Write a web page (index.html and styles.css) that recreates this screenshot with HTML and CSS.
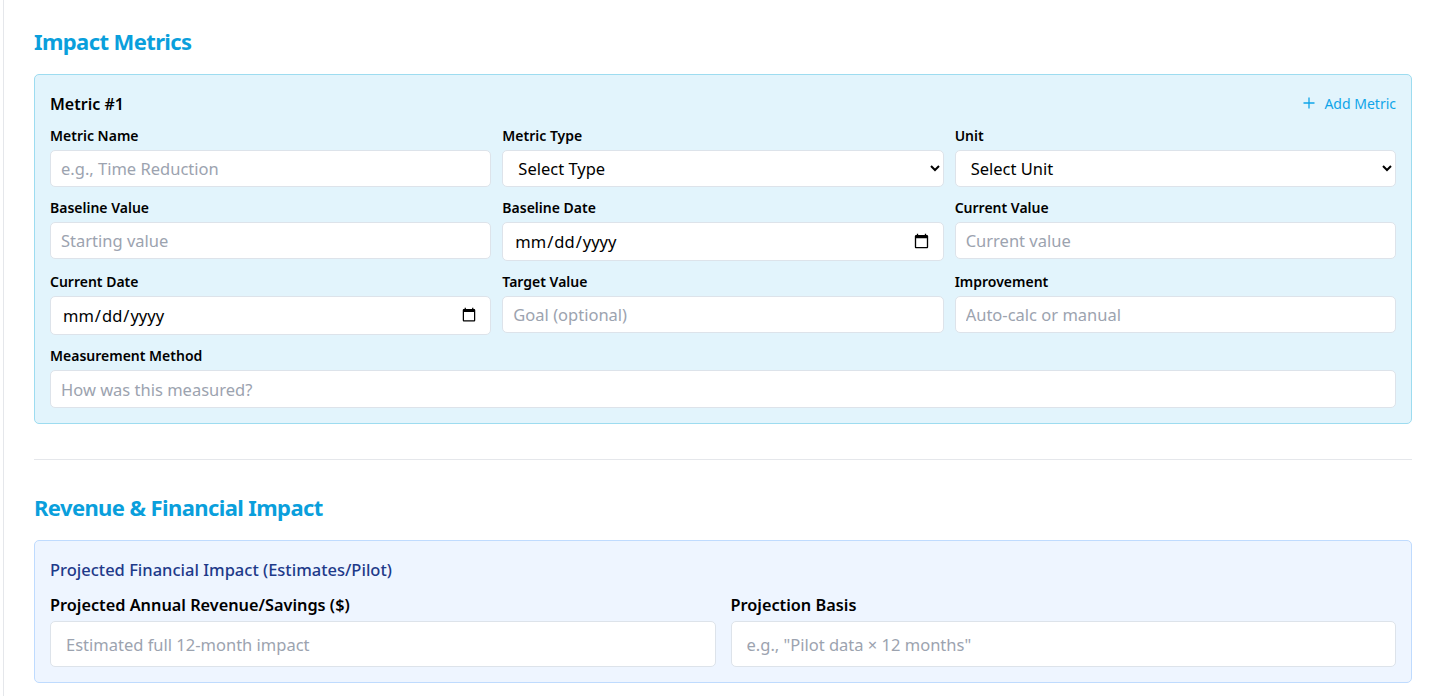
FILE: index.html
```html
<!DOCTYPE html>
<html lang="en">
<head>
<meta charset="utf-8">
<title>Impact Metrics</title>
<link rel="stylesheet" href="styles.css">
</head>
<body>
<div class="page">
  <section class="section">
    <h2 class="section-title">Impact Metrics</h2>
    <div class="metric-card">
      <div class="metric-head">
        <h3 class="metric-title">Metric #1</h3>
        <button class="add-btn" type="button">
          <svg width="12" height="12" viewBox="0 0 12 12" aria-hidden="true"><path d="M6 0.5v11M0.5 6h11" stroke="currentColor" stroke-width="1.3" fill="none"/></svg>
          <span>Add Metric</span>
        </button>
      </div>
      <div class="grid3">
        <div class="field">
          <label class="lbl">Metric Name</label>
          <input class="inp" type="text" placeholder="e.g., Time Reduction">
        </div>
        <div class="field">
          <label class="lbl">Metric Type</label>
          <select class="sel"><option>Select Type</option></select>
        </div>
        <div class="field">
          <label class="lbl">Unit</label>
          <select class="sel"><option>Select Unit</option></select>
        </div>
        <div class="field">
          <label class="lbl">Baseline Value</label>
          <input class="inp" type="text" placeholder="Starting value">
        </div>
        <div class="field">
          <label class="lbl">Baseline Date</label>
          <input class="inp date" type="date">
        </div>
        <div class="field">
          <label class="lbl">Current Value</label>
          <input class="inp" type="text" placeholder="Current value">
        </div>
        <div class="field">
          <label class="lbl">Current Date</label>
          <input class="inp date" type="date">
        </div>
        <div class="field">
          <label class="lbl">Target Value</label>
          <input class="inp" type="text" placeholder="Goal (optional)">
        </div>
        <div class="field">
          <label class="lbl">Improvement</label>
          <input class="inp" type="text" placeholder="Auto-calc or manual">
        </div>
        <div class="field span3">
          <label class="lbl">Measurement Method</label>
          <input class="inp wide" type="text" placeholder="How was this measured?">
        </div>
      </div>
    </div>
  </section>
  <hr class="divider">
  <section class="section">
    <h2 class="section-title">Revenue &amp; Financial Impact</h2>
    <div class="fin-card">
      <h4 class="fin-title">Projected Financial Impact (Estimates/Pilot)</h4>
      <div class="grid2">
        <div class="field">
          <label class="lbl2">Projected Annual Revenue/Savings ($)</label>
          <input class="inp2" type="text" placeholder="Estimated full 12-month impact">
        </div>
        <div class="field">
          <label class="lbl2">Projection Basis</label>
          <input class="inp2" type="text" placeholder="e.g., &quot;Pilot data × 12 months&quot;">
        </div>
      </div>
    </div>
  </section>
</div>
</body>
</html>
```

FILE: styles.css
```css
* { box-sizing: border-box; }
html, body {
  margin: 0;
  background: #ffffff;
  font-family: "Noto Sans", "Open Sans", sans-serif;
  color: #111;
}
body { padding-left: 3px; }
.page {
  border-left: 1px solid #e5e7eb;
  padding: 25px 29px 0 30px;
  min-height: 696px;
}
.section-title {
  margin: 0 0 17px 0;
  font-size: 22px;
  line-height: 32px;
  font-weight: 700;
  color: #0a9fdc;
  letter-spacing: -0.6px;
}
.metric-card {
  background: #e2f4fc;
  border: 1px solid #9ddcf0;
  border-radius: 5px;
  padding: 15px 15px 15px 15px;
}
.metric-head {
  display: flex;
  justify-content: space-between;
  align-items: center;
  height: 28px;
  margin-bottom: 8px;
}
.metric-title {
  margin: 0;
  font-size: 16px;
  font-weight: 600;
  color: #000;
}
.add-btn {
  display: flex;
  align-items: center;
  gap: 9px;
  border: 0;
  background: transparent;
  padding: 0;
  color: #0ea5e9;
  font-family: inherit;
  font-size: 14px;
  cursor: pointer;
  margin-top: -2px;
}
.grid3 {
  display: grid;
  grid-template-columns: repeat(3, 1fr);
  column-gap: 11px;
  row-gap: 11px;
}
.span3 { grid-column: 1 / span 3; }
.field {
  display: flex;
  flex-direction: column;
}
.lbl {
  font-size: 14px;
  font-weight: 600;
  line-height: 20px;
  margin-bottom: 4px;
  color: #000;
}
.inp, .sel {
  height: 37px;
  background: #fff;
  border: 1px solid #dde3ea;
  border-radius: 5px;
  padding: 0 10px;
  font-family: inherit;
  font-size: 16.5px;
  color: #000;
  outline: none;
}
.inp::placeholder { color: #9ca3af; }
.inp.date { height: 39px; padding: 0 11px; font-size: 16.5px; }
.inp.wide { height: 38px; }
.sel {
  padding: 0 11px;
  font-size: 16.5px;
  appearance: auto;
}
.divider {
  border: 0;
  border-top: 1px solid #e5e7eb;
  margin: 35px 0 31px 0;
}
.fin-card {
  background: #eef5ff;
  border: 1px solid #bfdbfe;
  border-radius: 5px;
  padding: 17px 15px 15px 15px;
}
.fin-title {
  margin: 0 0 12px 0;
  font-size: 16.5px;
  line-height: 24px;
  font-weight: 500;
  color: #1e3a8a;
}
.grid2 {
  display: grid;
  grid-template-columns: 1fr 1fr;
  column-gap: 15px;
}
.lbl2 {
  font-size: 16.3px;
  font-weight: 600;
  line-height: 22px;
  margin-bottom: 5px;
  color: #000;
}
.inp2 {
  height: 46px;
  background: #fff;
  border: 1px solid #dde3ea;
  border-radius: 5px;
  padding: 0 15px;
  font-family: inherit;
  font-size: 16.5px;
  outline: none;
}
.inp2::placeholder { color: #9ca3af; }
```
